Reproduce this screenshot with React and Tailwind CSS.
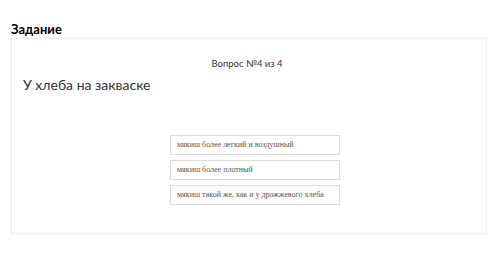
import React from "react";

const options = [
  "мякиш более легкий и воздушный",
  "мякиш более плотный",
  "мякиш такой же, как и у дрожжевого хлеба",
];

export default function App() {
  return (
    <div className="w-[500px] h-[262px] bg-white px-[11px] pt-[20px] font-['Lato',sans-serif]">
      <h2 className="text-[13px] leading-[18px] font-bold text-black">Задание</h2>
      <div className="w-[476px] h-[196px] border border-[#ececec] pt-[17px]">
        <p className="text-center text-[9.5px] leading-[15px] text-[#333] pr-[4px]">Вопрос №4 из 4</p>
        <p className="ml-[11px] mt-[2px] text-[14px] leading-[24px] text-[#333]">У хлеба на закваске</p>
        <div className="mt-[38px] pl-[12px] flex flex-col items-center gap-[5px]">
          {options.map((o) => (
            <div
              key={o}
              className="w-[170px] h-[20px] border border-[#dcdcdc] px-[6px] flex items-center whitespace-nowrap font-['Liberation_Serif',serif] text-[8px] text-[#555]"
            >
              {o}
            </div>
          ))}
        </div>
      </div>
    </div>
  );
}
